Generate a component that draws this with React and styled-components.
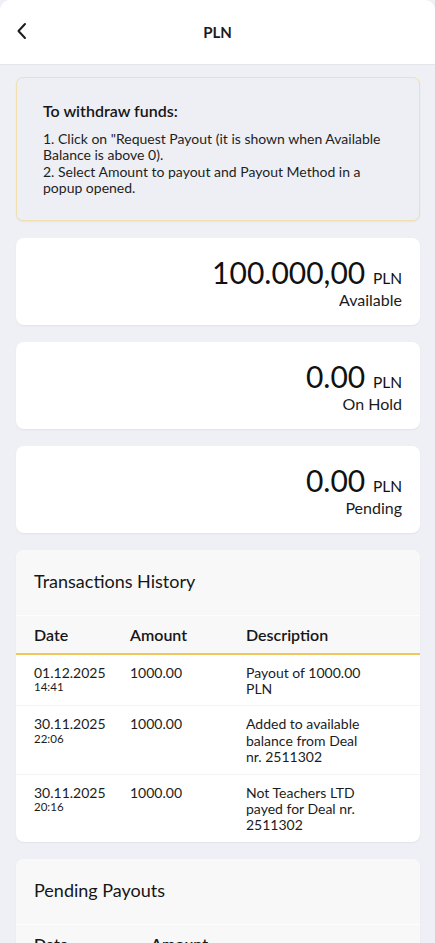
import React from "react";
import styled, { createGlobalStyle } from "styled-components";

const GlobalStyle = createGlobalStyle`
  html, body {
    margin: 0;
    padding: 0;
    background: #eef0f5;
    font-family: Lato, "Open Sans", sans-serif;
    color: #161616;
  }
`;

const balances = [
  { amount: "100.000,00", label: "Available" },
  { amount: "0.00", label: "On Hold" },
  { amount: "0.00", label: "Pending" },
];

const transactions = [
  {
    date: "01.12.2025",
    time: "14:41",
    amount: "1000.00",
    description: "Payout of 1000.00 PLN",
  },
  {
    date: "30.11.2025",
    time: "22:06",
    amount: "1000.00",
    description: "Added to available balance from Deal nr. 2511302",
  },
  {
    date: "30.11.2025",
    time: "20:16",
    amount: "1000.00",
    description: "Not Teachers LTD payed for Deal nr. 2511302",
  },
];

const historyColumns = "96px 116px 125px";
const pendingColumns = "117px 1fr";

const ChevronLeft = () => (
  <svg width="12" height="18" viewBox="0 0 12 18" fill="none">
    <path
      d="M9 2L2.5 9L9 16"
      stroke="#1b1b1f"
      strokeWidth="2"
      strokeLinecap="round"
      strokeLinejoin="round"
    />
  </svg>
);

const App = () => {
  return (
    <Page>
      <GlobalStyle />
      <Header>
        <BackButton>
          <ChevronLeft />
        </BackButton>
        <Title>PLN</Title>
      </Header>

      <Content>
        <InfoBox>
          <InfoTitle>To withdraw funds:</InfoTitle>
          <InfoText>
            1. Click on "Request Payout (it is shown when Available Balance is
            above 0).
            <br />
            2. Select Amount to payout and Payout Method in a popup opened.
          </InfoText>
        </InfoBox>

        {balances.map((b) => (
          <BalanceCard key={b.label}>
            <Amount>
              {b.amount} <Currency>PLN</Currency>
            </Amount>
            <BalanceLabel>{b.label}</BalanceLabel>
          </BalanceCard>
        ))}

        <TableCard>
          <CardTitle>Transactions History</CardTitle>
          <HeadRow $cols={historyColumns} $accent>
            <HeadCell>Date</HeadCell>
            <HeadCell>Amount</HeadCell>
            <HeadCell>Description</HeadCell>
          </HeadRow>
          {transactions.map((t, i) => (
            <Row key={i} $cols={historyColumns} $first={i === 0}>
              <Cell>
                {t.date}
                <Time>{t.time}</Time>
              </Cell>
              <Cell>{t.amount}</Cell>
              <Cell>{t.description}</Cell>
            </Row>
          ))}
        </TableCard>

        <TableCard>
          <CardTitle>Pending Payouts</CardTitle>
          <HeadRow $cols={pendingColumns}>
            <HeadCell>Date</HeadCell>
            <HeadCell>Amount</HeadCell>
          </HeadRow>
          <Row $cols={pendingColumns} $first>
            <Cell>—</Cell>
            <Cell>—</Cell>
          </Row>
        </TableCard>
      </Content>
    </Page>
  );
};

export default App;

const Page = styled.div`
  min-height: 100vh;
  background: #eef0f5;
`;

const Header = styled.header`
  position: relative;
  height: 64px;
  display: flex;
  align-items: center;
  justify-content: center;
  background: #ffffff;
  border-bottom: 1px solid #e3e5ea;
  border-radius: 10px 10px 0 0;
`;

const BackButton = styled.button`
  position: absolute;
  left: 12px;
  top: 22px;
  padding: 0 4px;
  border: none;
  background: none;
  display: flex;
`;

const Title = styled.h1`
  margin: 0;
  font-size: 15px;
  font-weight: 700;
  color: #1b1b1f;
`;

const Content = styled.main`
  display: flex;
  flex-direction: column;
  gap: 17px;
  padding: 12px 15px 40px 16px;
`;

const InfoBox = styled.section`
  background: #eeeff4;
  border: 1px solid #f1dfae;
  border-radius: 7px;
  padding: 23px 26px 23px 26px;
  box-shadow: 0 1px 2px rgba(0, 0, 0, 0.05);
`;

const InfoTitle = styled.div`
  font-size: 16px;
  font-weight: 600;
  line-height: 20px;
  margin-bottom: 10px;
`;

const InfoText = styled.p`
  margin: 0;
  font-size: 14px;
  line-height: 16.4px;
  color: #1e1e1e;
`;

const BalanceCard = styled.section`
  display: flex;
  flex-direction: column;
  align-items: flex-end;
  height: 87px;
  box-sizing: border-box;
  padding: 19px 18px 0 18px;
  background: #ffffff;
  border-radius: 8px;
  box-shadow: 0 1px 2px rgba(0, 0, 0, 0.06);
`;

const Amount = styled.div`
  font-size: 30px;
  line-height: 30px;
  color: #111;
`;

const Currency = styled.span`
  font-size: 15.5px;
`;

const BalanceLabel = styled.div`
  margin-top: -2px;
  font-size: 16px;
  line-height: 18px;
  color: #1b1b1b;
`;

const TableCard = styled.section`
  background: #ffffff;
  border-radius: 8px;
  overflow: hidden;
  box-shadow: 0 1px 2px rgba(0, 0, 0, 0.06);
`;

const CardTitle = styled.h2`
  margin: 0;
  padding: 20px 18px 23px 18px;
  font-size: 18px;
  font-weight: 400;
  line-height: 22px;
  background: #f8f8f9;
`;

const HeadRow = styled.div`
  display: grid;
  grid-template-columns: ${(p) => p.$cols};
  padding: 9px 18px 9px 18px;
  background: #f8f8f9;
  border-top: 1px solid #fdfdfd;
  border-bottom: 2px solid ${(p) => (p.$accent ? "#f1c75d" : "#f8f8f9")};
`;

const HeadCell = styled.div`
  font-size: 16px;
  font-weight: 600;
  line-height: 19px;
`;

const Row = styled.div`
  display: grid;
  grid-template-columns: ${(p) => p.$cols};
  padding: 10px 18px 8px 18px;
  border-top: ${(p) => (p.$first ? "none" : "1px solid #f3f3f5")};
`;

const Cell = styled.div`
  font-size: 14px;
  line-height: 16.4px;
  color: #1c1c1c;
`;

const Time = styled.div`
  font-size: 11.5px;
  line-height: 12px;
`;
